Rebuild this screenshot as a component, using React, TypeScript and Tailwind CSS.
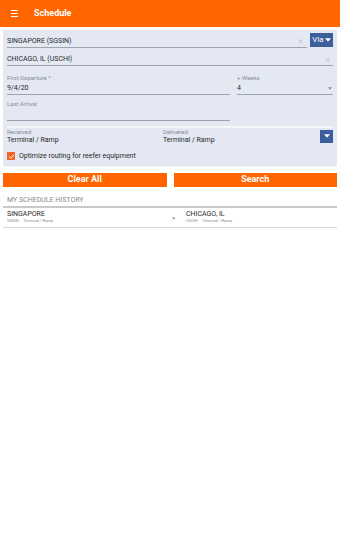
import React from 'react';

const Caret = ({ className = '' }: { className?: string }) => (
  <svg viewBox="0 0 10 6" className={className}>
    <path d="M0 0 L10 0 L5 6 Z" fill="currentColor" />
  </svg>
);

const Clear = ({ className = '' }: { className?: string }) => (
  <svg viewBox="0 0 10 10" className={className}>
    <path d="M1 1 L9 9 M9 1 L1 9" stroke="currentColor" strokeWidth="1.6" />
  </svg>
);

const App = () => {
  return (
    <div className="w-[340px] h-[534px] bg-white font-['Roboto',sans-serif] text-[#2a2a2a]">
      <div className="h-[27px] bg-[#ff6600] flex items-center px-[11px]">
        <div className="flex flex-col gap-[2px] w-[7px]">
          <span className="h-[1px] bg-white" />
          <span className="h-[1px] bg-white" />
          <span className="h-[1px] bg-white" />
        </div>
        <span className="ml-[16px] text-white font-bold text-[9px]">Schedule</span>
      </div>

      <div className="mx-[3px] mt-[3px] bg-[#e3e8f2] px-[4px] pb-[4px]">
        <div className="flex items-end h-[18px]">
          <div className="flex-1 flex items-center justify-between border-b border-[#9ea4ad] h-[12px]">
            <span className="text-[7px]">SINGAPORE (SGSIN)</span>
            <Clear className="w-[5px] h-[5px] text-[#b4b8be] mr-[4px]" />
          </div>
          <div className="ml-[3px] w-[23px] h-[14px] mb-[1px] bg-[#3d5e9d] text-white flex items-center justify-center gap-[1px]">
            <span className="text-[8px]">Via</span>
            <Caret className="w-[6px] h-[4px]" />
          </div>
        </div>
        <div className="flex items-center justify-between border-b border-[#9ea4ad] h-[12px] mt-[6px]">
          <span className="text-[7px]">CHICAGO, IL (USCHI)</span>
          <Clear className="w-[5px] h-[5px] text-[#b4b8be] mr-[3px]" />
        </div>

        <div className="flex gap-[7px] mt-[6px]">
          <div className="w-[223px]">
            <div className="text-[6px] text-[#8a8f96] h-[10px] flex items-center">First Departure *</div>
            <div className="text-[7px] h-[13px] pt-[1px] flex items-center border-b border-[#9ea4ad]">9/4/20</div>
          </div>
          <div className="flex-1">
            <div className="text-[6px] text-[#8a8f96] h-[10px] flex items-center">+ Weeks</div>
            <div className="text-[7px] h-[13px] pt-[1px] flex items-center justify-between border-b border-[#9ea4ad]">
              <span>4</span>
              <Caret className="w-[4px] h-[3px] text-[#8a8f96] mr-[1px]" />
            </div>
          </div>
        </div>
        <div className="w-[223px] mt-[3px]">
          <div className="text-[6px] text-[#8a8f96] h-[10px] flex items-center">Last Arrival</div>
          <div className="h-[13px] border-b border-[#9ea4ad]" />
        </div>

        <div className="h-[2px] bg-[#f4f6fa] mt-[5px]" />

        <div className="flex items-center">
          <div className="w-[156px]">
            <div className="text-[6px] text-[#8a8f96] leading-[8px]">Received:</div>
            <div className="text-[7px] leading-[8px]">Terminal / Ramp</div>
          </div>
          <div className="flex-1">
            <div className="text-[6px] text-[#8a8f96] leading-[8px]">Delivered:</div>
            <div className="text-[7px] leading-[8px]">Terminal / Ramp</div>
          </div>
          <div className="w-[13px] h-[13px] bg-[#3d5e9d] text-white flex items-center justify-center">
            <Caret className="w-[6px] h-[4px]" />
          </div>
        </div>

        <div className="flex items-center mt-[7px]">
          <div className="w-[8px] h-[8px] bg-[#f26522] flex items-center justify-center">
            <svg viewBox="0 0 10 10" className="w-[7px] h-[7px]">
              <path d="M1.5 5.2 L4 7.5 L8.5 2.5" stroke="white" strokeWidth="1.4" fill="none" />
            </svg>
          </div>
          <span className="ml-[4px] text-[7px]">Optimize routing for reefer equipment</span>
        </div>
      </div>
      <div className="mx-[3px] h-[1px] bg-[#f0f2f6]" />

      <div className="flex gap-[7px] mx-[3px] mt-[6px]">
        <button className="flex-1 h-[14px] bg-[#ff6600] text-white font-bold text-[9px]">Clear All</button>
        <button className="flex-1 h-[14px] bg-[#ff6600] text-white font-bold text-[9px]">Search</button>
      </div>

      <div className="mx-[3px] mt-[9px]">
        <div className="px-[4px] text-[7px] text-[#8a8a8a] h-[10px] flex items-center">MY SCHEDULE HISTORY</div>
        <div className="h-[2px] bg-[#c9c9c9]" />
        <div className="flex items-center px-[4px] h-[20px] border-b border-[#d6d6d6]">
          <div className="w-[165px]">
            <div className="text-[7px] leading-[8px]">SINGAPORE</div>
            <div className="text-[4px] leading-[6px] text-[#8a8a8a]">SGSIN &nbsp;·&nbsp; Terminal / Ramp</div>
          </div>
          <span className="w-[14px] text-[6px]">&gt;</span>
          <div className="flex-1">
            <div className="text-[7px] leading-[8px]">CHICAGO, IL</div>
            <div className="text-[4px] leading-[6px] text-[#8a8a8a]">USCHI &nbsp;·&nbsp; Terminal / Ramp</div>
          </div>
        </div>
      </div>
    </div>
  );
};

export default App;
